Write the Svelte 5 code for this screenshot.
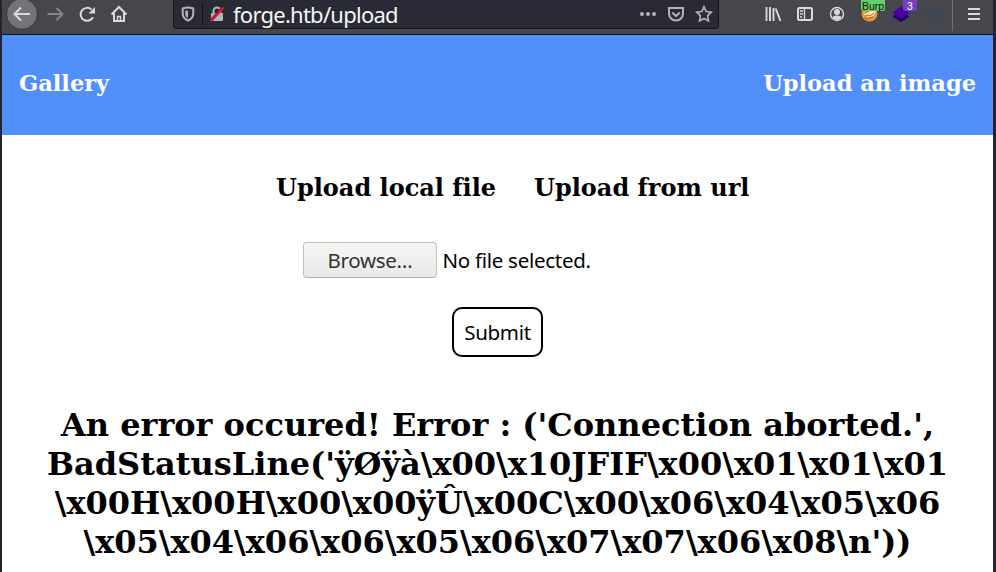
<script>
  const lines = [
    "An error occured! Error : ('Connection aborted.',",
    "BadStatusLine('ÿØÿà\\x00\\x10JFIF\\x00\\x01\\x01\\x01",
    "\\x00H\\x00H\\x00\\x00ÿÛ\\x00C\\x00\\x06\\x04\\x05\\x06",
    "\\x05\\x04\\x06\\x06\\x05\\x06\\x07\\x07\\x06\\x08\\n'))"
  ];
</script>

<div class="window">
  <div class="toolbar">
    <div class="nav">
      <svg class="ic back" viewBox="0 0 32 34"><circle cx="16" cy="14" r="15.5" fill="#737478" stroke="#38393d" stroke-width="1" /><path d="M24 14H9M15 7.5L8.5 14l6.500 6.500" /></svg>
      <svg class="ic fwd" viewBox="0 0 32 34"><path d="M8.500 14H23M17.500 8l6 6-6 6" /></svg>
      <svg class="ic" viewBox="0 0 32 34"><path d="M22 17.200A6.500 6.500 0 1 1 20.500 9.500" /><path class="solid" d="M24 7v6.500H17.500z" /></svg>
      <svg class="ic" viewBox="0 0 32 34"><path d="M8.500 14.500L16 7l7.500 7.500M11 13v8h10v-8" /><path d="M14.500 20.500v-4h3v4" stroke-width="1.500" /></svg>
    </div>
    <div class="url">
      <svg class="shield" viewBox="0 0 28 28"><path d="M14 7.500c2 0 3.800.5 5.300 1v5c0 3.500-2.200 5.800-5.300 7.200-3.100-1.400-5.300-3.700-5.300-7.200v-5c1.500-.5 3.300-1 5.300-1z" /><path class="solid" d="M14 10.500v7.500c-2-1-2.800-2.500-2.800-4.500v-2.700z" /></svg>
      <span class="bar"></span>
      <svg class="lock" viewBox="0 0 28 28"><rect class="solid" x="8" y="13" width="12" height="8" rx="1" /><path d="M10.500 13v-2a3.500 3.500 0 0 1 7 0v2" /><path d="M7.500 21L20 7.500" stroke="#292a35" stroke-width="3" /><path class="slash" d="M7.500 21L20.500 7.500" /></svg>
      <span class="address">forge.htb/upload</span>
      <svg class="actions" viewBox="0 0 80 28"><g class="solid"><circle cx="4" cy="14" r="2" /><circle cx="10" cy="14" r="2" /><circle cx="16" cy="14" r="2" /></g><path d="M31 8h14v5.500a7 7 0 0 1-14 0z" /><path d="M34.300 12.500l3.700 3.500 3.700-3.500" /><path d="M66 6.800l2.200 4.700 5 .7-3.600 3.600.8 5.100-4.400-2.500-4.400 2.500.8-5.100-3.600-3.600 5-.7z" stroke-width="1.700" /></svg>
    </div>
    <div class="tools">
      <svg class="ic" viewBox="0 0 32 34"><path d="M9.500 7v14M13 7v14M16.500 8v13M18.700 8.500L23.500 21" stroke-width="1.900" /></svg>
      <svg class="ic" viewBox="0 0 32 34"><rect x="9" y="8" width="14" height="12" rx="1.500" /><path d="M15.500 8v12M11 11h3M11 14h3M11 17h2" stroke-width="1.300" /></svg>
      <svg class="ic" viewBox="0 0 32 34"><circle cx="16" cy="14" r="6.500" stroke-width="1.400" /><circle class="solid" cx="16" cy="12" r="3" /><path class="solid" d="M11.500 17c2-2 7-2 9 0-1 2-3 2.800-4.500 2.800S12.500 19 11.500 17z" /></svg>
      <div class="ext">
        <svg class="ic" viewBox="0 0 32 34"><circle cx="16.500" cy="13.500" r="8" fill="#ef9134" stroke="none" /><path d="M10 13c3 2 5-1 8-2 3 0 3-1 5-1-1 4-2 7-5 7-3 1-6-1-8-4z" fill="#ffe3bd" stroke="none" /><path d="M12 16l3-1 2 1 4-3M11 18l3 1 6-2" stroke="#b0652c" stroke-width="1" /></svg>
        <span class="badge burp">Burp</span>
      </div>
      <div class="ext">
        <svg class="ic" viewBox="0 0 32 34"><path d="M8 16.500l8 5 8-5-8-5z" fill="#24006a" stroke="#24006a" stroke-width="1" /><path d="M7.500 13L16 6l8.500 7-8.500 5.500z" fill="#4900a5" stroke="none" /></svg>
        <span class="badge count">3</span>
      </div>
      <svg class="ic ghost" viewBox="0 0 32 34"><path d="M16 7l6 3.500v7L16 21l-6-3.500v-7zM10 10.500l6 3.500 6-3.500M16 14v7M10 17.500l6-3.500 6 3.500M16 7v7M8 14h16" /></svg>
      <span class="divider"></span>
      <svg class="ic menu" viewBox="0 0 32 34"><path d="M10 9h12M10 14h12M10 19h12" /></svg>
    </div>
  </div>

  <div class="page">
    <header><a href="/" class="gallery">Gallery</a><a href="/upload" class="up">Upload an image</a></header>
    <main>
      <div class="tabs"><span class="t1">Upload local file</span><span class="t2">Upload from url</span></div>
      <div class="file"><button class="browse"><span>Browse…</span></button><span class="none">No file selected.</span></div>
      <button class="submit"><span>Submit</span></button>
      <h1>{#each lines as line}<span>{line}</span>{/each}</h1>
    </main>
  </div>
</div>

<style>
  :global(body) { margin: 0; overflow: hidden; }
  .window { width: 996px; height: 572px; box-sizing: border-box; border-left: 2px solid #23242f; border-right: 3px solid #23242f; background: #fff; overflow: hidden; }
  .toolbar { height: 34px; display: flex; background: #45474d; border-bottom: 1px solid #111217; }
  .nav { display: flex; width: 171px; padding-left: 4px; box-sizing: border-box; }
  svg { display: block; flex: none; fill: none; stroke: #dadad7; stroke-width: 2; }
  .solid { fill: #dadad7; stroke: none; }
  .ic { width: 32px; height: 34px; }
  .back { margin-right: 1px; }
  .fwd { stroke: #85868a; }
  .url { width: 546px; height: 29px; box-sizing: border-box; display: flex; background: #292a35; border: 1px solid #14151b; border-top: 0; border-radius: 0 0 4px 4px; }
  .url svg { height: 28px; stroke: #b4b4b7; }
  .url .solid { fill: #b4b4b7; stroke: none; }
  .url .slash { stroke: #f50b43; stroke-width: 2.2; }
  .shield { width: 28px; }
  .bar { width: 1px; height: 22px; margin-top: 3px; background: #14151b; }
  .lock { width: 28px; }
  .address { flex: 1; font: 22px/28px "Noto Sans", sans-serif; letter-spacing: -0.75px; color: #f6f6f4; padding-left: 2px; white-space: nowrap; }
  .actions { width: 80px; }
  .tools { display: flex; margin-left: 38px; }
  .ext { position: relative; }
  .badge { position: absolute; top: 0; box-sizing: border-box; font-family: "Liberation Sans", sans-serif; border-radius: 0 0 2px 2px; text-align: center; white-space: nowrap; }
  .burp { left: 8px; width: 24px; height: 11px; font-size: 10.5px; line-height: 12px; background: #62cf67; color: #141414; }
  .count { left: 18px; width: 14px; height: 11px; font-size: 10.5px; line-height: 12px; background: #7040bd; color: #fff; }
  .ghost { stroke: #34495c; stroke-width: 1; }
  .divider { width: 1px; height: 31px; margin-left: 3px; background: #6e7075; }
  .menu { margin-left: 5px; }
  .page { font-family: "DejaVu Serif", serif; color: #000; }
  header { height: 100px; box-sizing: border-box; padding: 0 17px 4px; display: flex; align-items: center; justify-content: space-between; background: #5190fa; }
  header a { color: #fff; font-size: 22.5px; line-height: 26px; font-weight: 700; text-decoration: none; white-space: nowrap; }
  main { display: flex; flex-direction: column; }
  .tabs { display: flex; padding: 39px 0 0 274px; font-size: 24px; line-height: 28px; font-weight: 700; font-variant-ligatures: none; white-space: nowrap; }
  .t1 { width: 258px; }
  .file { display: flex; align-items: center; height: 36px; margin: 40px 0 0 301px; font: 20.5px/36px "Noto Sans", sans-serif; letter-spacing: -0.28px; }
  button { font: 20.5px "Noto Sans", sans-serif; letter-spacing: -0.3px; box-sizing: border-box; padding: 0; white-space: nowrap; }
  .browse { width: 134px; height: 36px; border: 1px solid #c4bfba; border-bottom-color: #b5aea7; border-radius: 4px; background: linear-gradient(#f7f6f5, #eae8e6); color: #2e3436; }
  .none { margin-left: 5.5px; }
  .submit { width: 91px; height: 50px; margin: 29px 0 0 450px; border: 2px solid #000; border-radius: 10px; background: #fff; color: #000; }
  h1 { margin: 49px 0 0; font-size: 32px; line-height: 39px; text-align: center; }
  h1 span { display: block; white-space: nowrap; }
</style>
